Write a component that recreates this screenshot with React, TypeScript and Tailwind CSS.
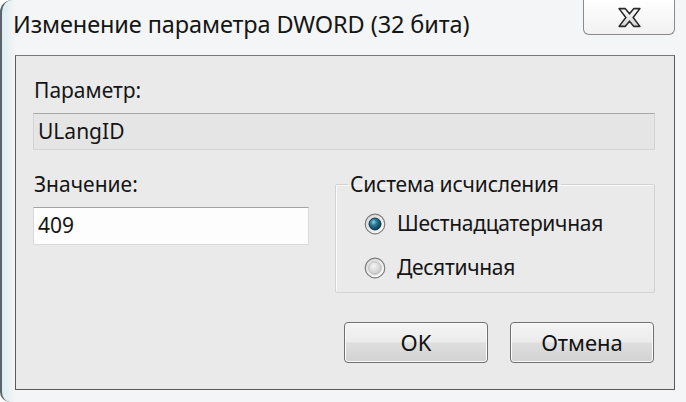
import React from "react";

const font = { fontFamily: '"Noto Sans", "Open Sans", sans-serif' };

function CloseX() {
  return (
    <svg width="25" height="21" viewBox="0 0 24 20">
      <defs>
        <linearGradient id="xg" x1="0" y1="0" x2="0" y2="1">
          <stop offset="0" stopColor="#ffffff" />
          <stop offset="1" stopColor="#d4d4d4" />
        </linearGradient>
      </defs>
      <polygon
        points="2,1.5 8,1.5 12,6.5 16,1.5 22,1.5 15.5,10 22,18.5 16,18.5 12,13.5 8,18.5 2,18.5 8.5,10"
        fill="url(#xg)"
        stroke="#2a2a2a"
        strokeWidth="1.5"
        strokeLinejoin="round"
      />
    </svg>
  );
}

function Radio({ checked }: { checked: boolean }) {
  return (
    <svg width="22" height="22" viewBox="0 0 22 22">
      <defs>
        <linearGradient id="ring" x1="0" y1="0" x2="1" y2="1">
          <stop offset="0" stopColor="#d6d6d6" />
          <stop offset="1" stopColor="#ffffff" />
        </linearGradient>
        <radialGradient id="dot" cx="0.38" cy="0.35" r="0.7">
          <stop offset="0" stopColor="#8fd3ea" />
          <stop offset="0.35" stopColor="#2d7f9c" />
          <stop offset="1" stopColor="#0c3143" />
        </radialGradient>
        <radialGradient id="off" cx="0.4" cy="0.35" r="0.7">
          <stop offset="0" stopColor="#f4f4f4" />
          <stop offset="1" stopColor="#c6c6c6" />
        </radialGradient>
      </defs>
      <circle cx="11" cy="11" r="9.8" fill="url(#ring)" stroke="#7e7e7e" strokeWidth="1.2" />
      {checked ? (
        <circle cx="11" cy="11" r="6" fill="url(#dot)" stroke="#123a4c" strokeWidth="1" />
      ) : (
        <circle cx="11" cy="11" r="6.4" fill="url(#off)" stroke="#b8b8b8" strokeWidth="0.8" />
      )}
    </svg>
  );
}

function Button({ children }: { children: React.ReactNode }) {
  return (
    <div className="w-[144px] h-[41px] rounded-[4px] border border-[#707070] bg-[linear-gradient(180deg,#f4f4f4_0%,#ececec_48%,#dedede_52%,#d2d2d2_100%)] shadow-[inset_0_0_0_1px_#fbfbfb] flex items-center justify-center text-[22px] text-[#111]">
      {children}
    </div>
  );
}

export default function App() {
  return (
    <div
      style={font}
      className="w-[686px] h-[402px] overflow-hidden rounded-tl-[12px] rounded-bl-[10px] border-l-2 border-[#5c6368] bg-[linear-gradient(90deg,#dcecf1_0px,#f3f5f6_13px)] text-[#151515]"
    >
      {/* title bar */}
      <div className="flex items-start h-[55px]">
        <div className="pl-[11px] pt-[8px] text-[23.5px] leading-[32px] tracking-[-0.1px]">
          Изменение параметра DWORD (32 бита)
        </div>
        <div className="ml-auto mr-[11px] w-[92px] h-[35px] rounded-b-[6px] border border-t-0 border-[#8a8a8a] bg-[linear-gradient(180deg,#ffffff,#f1f1f1)] flex items-center justify-center">
          <CloseX />
        </div>
      </div>

      {/* panel */}
      <div className="ml-[13px] mr-[11px] h-[335px] border border-[#5a5a5a] border-t-[#7a7a7a] bg-[#eaeaea] pl-[17px] pr-[19px] pt-[22px]">
        <div className="text-[21px] leading-[24px] pl-[1px]">Параметр:</div>
        <div className="mt-[11px] h-[37px] border border-[#d3d3d3] border-t-[#a9a9a9] bg-[#e5e5e5] pl-[4px] flex items-center text-[21px]">
          ULangID
        </div>

        <div className="mt-[22px] flex">
          <div className="w-[276px]">
            <div className="text-[21px] leading-[24px] pl-[1px]">Значение:</div>
            <div className="mt-[11px] h-[38px] border border-[#dadada] border-t-[#a3a3a3] bg-[#fdfdfd] pl-[4px] flex items-center text-[21px]">
              409
            </div>
          </div>
          <fieldset className="ml-auto w-[320px] h-[121px] border border-[#d2d2d2] shadow-[inset_1px_1px_0_#fafafa] rounded-[2px]">
            <legend className="ml-[12px] px-[2px] text-[21px] leading-[24px] tracking-[-0.2px]">Система исчисления</legend>
            <div className="pl-[28px]">
              <div className="mt-[16px] flex items-center h-[24px] gap-[11px] text-[21px] tracking-[-0.3px]">
                <Radio checked={true} />
                <span>Шестнадцатеричная</span>
              </div>
              <div className="mt-[20px] flex items-center h-[24px] gap-[11px] text-[21px] tracking-[-0.3px]">
                <Radio checked={false} />
                <span>Десятичная</span>
              </div>
            </div>
          </fieldset>
        </div>

        <div className="mt-[29px] flex justify-end gap-[22px] mr-[1px]">
          <Button>OK</Button>
          <Button>Отмена</Button>
        </div>
      </div>
    </div>
  );
}
